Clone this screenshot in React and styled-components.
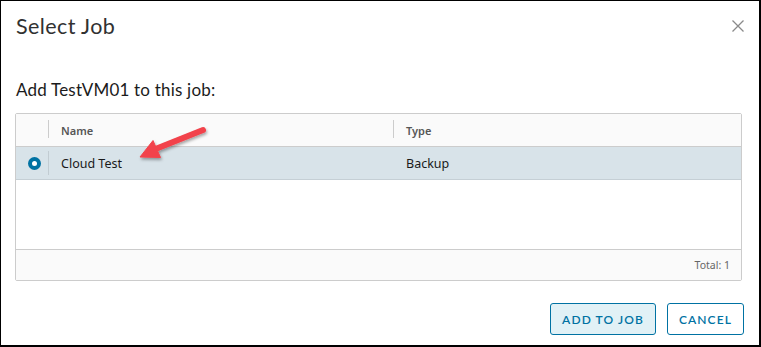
import React from "react";
import styled, { createGlobalStyle } from "styled-components";

const Global = createGlobalStyle`
  html, body { margin: 0; padding: 0; background: #fff; }
  * { box-sizing: border-box; }
`;

const Frame = styled.div`
  position: relative;
  width: 761px;
  height: 347px;
  border-style: solid;
  border-color: #000;
  border-width: 1px 2px 2px 1px;
  background: #fff;
  display: flex;
  flex-direction: column;
  font-family: "Lato", "Noto Sans", sans-serif;
`;

const Header = styled.div`
  display: flex;
  align-items: center;
  justify-content: space-between;
  height: 50px;
  padding: 0 15px 0 15px;
`;

const Title = styled.h1`
  margin: 0;
  font-family: "Lato", sans-serif;
  font-weight: 400;
  font-size: 21.5px;
  color: #313131;
  letter-spacing: 0.4px;
`;

const Close = styled.button`
  border: none;
  background: none;
  padding: 0;
  width: 13px;
  height: 13px;
  display: flex;
  align-items: center;
  justify-content: center;
  cursor: pointer;
`;

const Body = styled.div`
  padding: 28px 17px 0 14px;
  display: flex;
  flex-direction: column;
`;

const Prompt = styled.p`
  margin: 0 0 0 1px;
  font-size: 17px;
  line-height: 22px;
  letter-spacing: 0.2px;
  color: #1b1b1b;
  font-family: "Lato", sans-serif;
`;

const Grid = styled.div`
  margin-top: 12px;
  height: 168px;
  border: 1px solid #cccccc;
  border-radius: 2px;
  display: flex;
  flex-direction: column;
  font-family: "Noto Sans", "Open Sans", sans-serif;
`;

const Row = styled.div`
  display: grid;
  grid-template-columns: 33px 345px 1fr;
  height: ${(p) => p.$h}px;
  align-items: center;
  background: ${(p) => p.$bg};
  border-bottom: 1px solid ${(p) => p.$line || "#cccccc"};
`;

const Cell = styled.div`
  height: 100%;
  display: flex;
  align-items: center;
  position: relative;
  padding-left: ${(p) => (p.$sel ? 0 : 12)}px;
  justify-content: ${(p) => (p.$sel ? "center" : "flex-start")};
  font-size: ${(p) => (p.$head ? 11 : 12.5)}px;
  font-weight: ${(p) => (p.$head ? 600 : 400)};
  color: ${(p) => (p.$head ? "#565656" : "#1a1a1a")};
  &::after {
    content: "";
    display: ${(p) => (p.$divider ? "block" : "none")};
    position: absolute;
    right: 0;
    top: ${(p) => (p.$head ? 6 : 4)}px;
    bottom: ${(p) => (p.$head ? 8 : 4)}px;
    width: 1px;
    background: ${(p) => (p.$head ? "#cccccc" : "#c2ccd2")};
  }
`;

const Radio = styled.span`
  width: 13px;
  height: 13px;
  border-radius: 50%;
  background: #0072a3;
  display: flex;
  align-items: center;
  justify-content: center;
  margin-left: 3px;
  &::before {
    content: "";
    width: 5px;
    height: 5px;
    border-radius: 50%;
    background: #fff;
  }
`;

const Spacer = styled.div`
  flex: 1;
  background: #fff;
  border-bottom: 1px solid #cccccc;
`;

const GridFooter = styled.div`
  height: 30px;
  background: #fafafa;
  display: flex;
  align-items: center;
  justify-content: flex-end;
  padding-right: 11px;
  font-size: 10.5px;
  color: #666;
`;

const Footer = styled.div`
  margin-top: auto;
  display: flex;
  justify-content: flex-end;
  gap: 11px;
  padding: 0 15px 10px 0;
`;

const Button = styled.button`
  height: 32px;
  padding: 0 11px;
  border: 1px solid #0072a3;
  border-radius: 3px;
  background: ${(p) => (p.$primary ? "#e1f1f6" : "#fff")};
  color: #0072a3;
  font-family: "Lato", sans-serif;
  font-size: 12px;
  font-weight: 600;
  letter-spacing: 1.1px;
  text-transform: uppercase;
  cursor: pointer;
`;

const Annotation = styled.svg`
  position: absolute;
  left: -1px;
  top: -1px;
  pointer-events: none;
`;

export default function App() {
  return (
    <>
      <Global />
      <Frame>
        <Header>
          <Title>Select Job</Title>
          <Close aria-label="Close">
            <svg width="12" height="12" viewBox="0 0 12 12">
              <path d="M0.5 0.5 L11.5 11.5 M11.5 0.5 L0.5 11.5" stroke="#8a8a8a" strokeWidth="1.3" />
            </svg>
          </Close>
        </Header>
        <Body>
          <Prompt>Add TestVM01 to this job:</Prompt>
          <Grid>
            <Row $h={33} $bg="#fafafa">
              <Cell $sel $head $divider />
              <Cell $head $divider>Name</Cell>
              <Cell $head>Type</Cell>
            </Row>
            <Row $h={33} $bg="#d8e3e9" $line="#c5cfd5">
              <Cell $sel $divider>
                <Radio />
              </Cell>
              <Cell>Cloud Test</Cell>
              <Cell>Backup</Cell>
            </Row>
            <Spacer />
            <GridFooter>Total: 1</GridFooter>
          </Grid>
        </Body>
        <Footer>
          <Button $primary>Add to job</Button>
          <Button>Cancel</Button>
        </Footer>
        <Annotation width="761" height="347" viewBox="0 0 761 347">
          <defs>
            <filter id="sh" x="-20%" y="-20%" width="140%" height="160%">
              <feDropShadow dx="1" dy="2" stdDeviation="1.5" floodColor="#000" floodOpacity="0.35" />
            </filter>
          </defs>
          <g filter="url(#sh)" fill="#f2434b" stroke="#f2434b">
            <line x1="203" y1="130" x2="153" y2="150" strokeWidth="6" strokeLinecap="round" />
            <polygon points="140,157 153,140.5 160.5,157.5" strokeWidth="1" strokeLinejoin="round" />
          </g>
        </Annotation>
      </Frame>
    </>
  );
}
